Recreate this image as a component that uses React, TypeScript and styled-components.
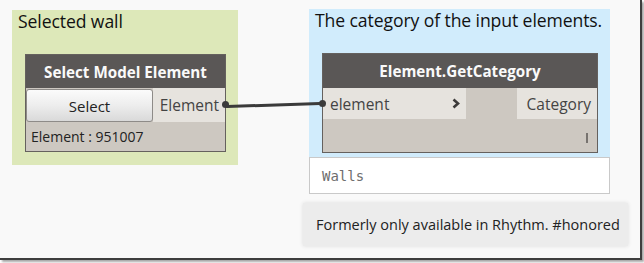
import React from 'react'
import styled, { createGlobalStyle } from 'styled-components'

const GlobalStyle = createGlobalStyle`
  html, body {
    margin: 0;
    padding: 0;
    background: #ffffff;
  }
  body {
    font-family: 'Open Sans', 'Noto Sans', sans-serif;
    width: 644px;
    height: 263px;
    overflow: hidden;
  }
`

export default function App() {
  return (
    <>
      <GlobalStyle />
      <Canvas>
        <Group $bg="#dde8b9" style={{ left: 12, top: 10, width: 226, height: 155 }}>
          <GroupTitle>Selected wall</GroupTitle>
          <Node>
            <NodeHeader $h={33}>Select Model Element</NodeHeader>
            <PortRow $h={34}>
              <SelectButton>Select</SelectButton>
              <OutPort>
                Element
                <PortNub $side="right" />
              </OutPort>
            </PortRow>
            <InfoRow>Element : 951007</InfoRow>
          </Node>
        </Group>

        <Group $bg="#d1ecfc" style={{ left: 309, top: 9, width: 301, height: 148 }}>
          <GroupTitle>The category of the input elements.</GroupTitle>
          <Node>
            <NodeHeader $h={34}>Element.GetCategory</NodeHeader>
            <PortRow $h={31}>
              <InPort>
                <PortNub $side="left" />
                element
                <Chevron viewBox="0 0 8 11">
                  <path d="M1.5 1.5 L6 5.5 L1.5 9.5" fill="none" stroke="#3c3a39" strokeWidth="2.6" />
                </Chevron>
              </InPort>
              <Spacer />
              <OutPort>Category</OutPort>
            </PortRow>
            <LacingRow>
              <LacingMark />
            </LacingRow>
          </Node>
        </Group>

        <Wire width="644" height="263">
          <path d="M227 106.5 L320 103.5" stroke="#3b3b3b" strokeWidth="3" strokeLinecap="round" />
        </Wire>

        <Preview>Walls</Preview>

        <Tooltip>Formerly only available in Rhythm. #honored</Tooltip>
      </Canvas>
    </>
  )
}

const Canvas = styled.div`
  position: relative;
  width: 640px;
  height: 258px;
  background: #f9f9f9;
  border-right: 2px solid #3e3e3e;
  border-bottom: 2px solid #3e3e3e;
  box-shadow: 2px 2px 2px rgba(0, 0, 0, 0.35);
`

const Group = styled.div<{ $bg: string }>`
  position: absolute;
  box-sizing: border-box;
  background: ${p => p.$bg};
  display: flex;
  flex-direction: column;
`

const GroupTitle = styled.div`
  height: 44px;
  padding-left: 6px;
  font-size: 17.6px;
  line-height: 22px;
  color: #111;
  white-space: nowrap;
  letter-spacing: -0.1px;
`

const Node = styled.div`
  margin: 0 12px 0 13px;
  display: flex;
  flex-direction: column;
  border: 1px solid #65615e;
  background: #cdc8c1;
`

const NodeHeader = styled.div<{ $h: number }>`
  height: ${p => p.$h}px;
  background: #5a5756;
  color: #fafafa;
  font-weight: 700;
  font-size: 15.2px;
  display: flex;
  align-items: center;
  justify-content: center;
  white-space: nowrap;
`

const PortRow = styled.div<{ $h: number }>`
  height: ${p => p.$h}px;
  display: flex;
  align-items: stretch;
`

const SelectButton = styled.button`
  width: 127px;
  margin: 1px 0 0 0;
  border: 1px solid #8e8b88;
  border-radius: 3px;
  background: linear-gradient(#fbfbfb, #ededed 50%, #d9d9d9);
  font-family: inherit;
  font-size: 15px;
  color: #222;
  padding: 0;
`

const OutPort = styled.div`
  position: relative;
  flex: 1;
  background: #e6e3de;
  display: flex;
  align-items: center;
  justify-content: flex-end;
  padding-right: 6px;
  font-size: 15.5px;
  color: #444;
  white-space: nowrap;
`

const InPort = styled.div`
  position: relative;
  width: 143px;
  box-sizing: border-box;
  background: #e6e3de;
  display: flex;
  align-items: center;
  justify-content: space-between;
  padding: 0 6px 0 7px;
  font-size: 15.5px;
  color: #444;
`

const PortNub = styled.span<{ $side: 'left' | 'right' }>`
  position: absolute;
  top: 50%;
  ${p => (p.$side === 'left' ? 'left: -4px;' : 'right: -4px;')}
  width: 7px;
  height: 7px;
  margin-top: -4px;
  border-radius: 50%;
  background: #3b3b3b;
`

const Chevron = styled.svg`
  width: 8px;
  height: 11px;
`

const Spacer = styled.div`
  width: 51px;
`

const InfoRow = styled.div`
  height: 29px;
  display: flex;
  align-items: center;
  padding-left: 5px;
  font-size: 14px;
  color: #222;
`

const LacingRow = styled.div`
  height: 33px;
  display: flex;
  align-items: flex-end;
  justify-content: flex-end;
  padding: 0 9px 9px 0;
  box-sizing: border-box;
`

const LacingMark = styled.span`
  width: 2px;
  height: 10px;
  background: #77736f;
`

const Wire = styled.svg`
  position: absolute;
  left: 0;
  top: 0;
  pointer-events: none;
`

const Preview = styled.div`
  position: absolute;
  left: 309px;
  top: 157px;
  width: 301px;
  height: 37px;
  box-sizing: border-box;
  background: #fff;
  border: 1px solid #c9c9c9;
  display: flex;
  align-items: center;
  padding-left: 12px;
  font-family: 'DejaVu Sans Mono', 'Liberation Mono', monospace;
  font-size: 14px;
  color: #6e6e6e;
`

const Tooltip = styled.div`
  position: absolute;
  left: 303px;
  top: 203px;
  width: 325px;
  height: 43px;
  box-sizing: border-box;
  background: #ececec;
  box-shadow: 0 0 4px rgba(0, 0, 0, 0.12);
  display: flex;
  align-items: center;
  padding-left: 13px;
  font-size: 14.5px;
  color: #222;
  white-space: nowrap;
`
